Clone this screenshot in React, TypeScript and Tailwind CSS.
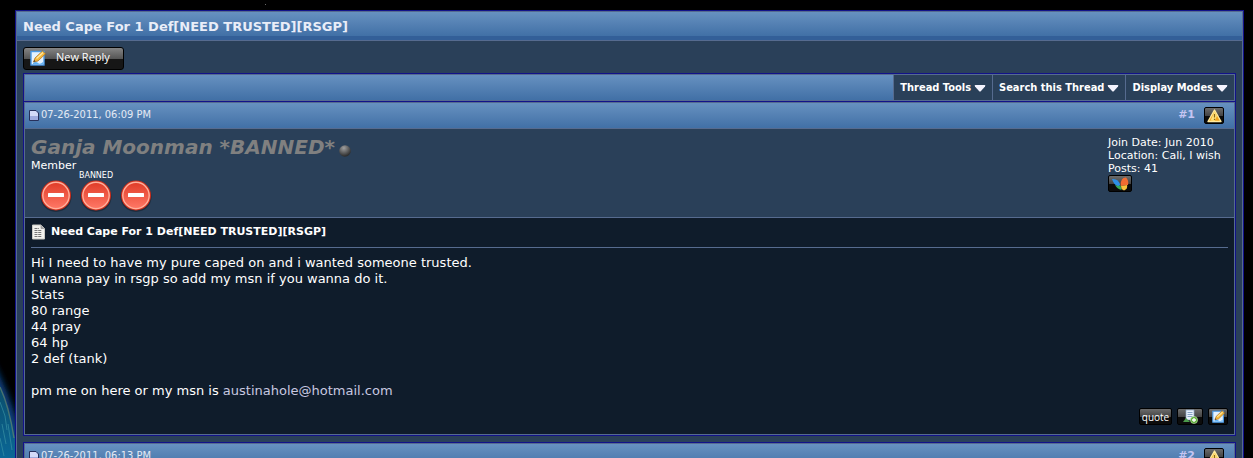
import { ReactNode } from 'react';

const TAHOMA = "font-['DejaVu_Sans_Condensed','DejaVu_Sans',sans-serif]";

function Frame({ children, className = '' }: { children: ReactNode; className?: string }) {
  return (
    <div className={`border border-[#12128a] ${className}`}>
      <div className="border border-[#566b8f]">{children}</div>
    </div>
  );
}

function PencilIcon({ className }: { className: string }) {
  return (
    <svg className={className} viewBox="0 0 16 16">
      <rect x="1" y="1.5" width="13" height="13.5" fill="#e4f2ff" stroke="#4a9be8" strokeWidth="1.4" />
      <path d="M3 13 Q6 11 8 13 T13 12 V14 H3Z" fill="#5fb2f5" />
      <path d="M3.5 12 L5 8 L12.5 1 L15.5 3.8 L8 11Z" fill="#f5b83b" stroke="#a8691a" strokeWidth=".7" />
      <path d="M6.5 8.5 L13 2.5" stroke="#ffe9a0" strokeWidth="1.3" />
      <path d="M3.5 12 L4.2 10 L5.5 11.3Z" fill="#333" />
    </svg>
  );
}

function Arrow() {
  return (
    <svg className="w-3 h-[7px] ml-[3px]" viewBox="0 0 12 7">
      <path d="M1.5 0 H10.5 Q12 0 11 1.4 L7 6 Q6 7 5 6 L1 1.4 Q0 0 1.5 0Z" fill="#f4f4ff" />
    </svg>
  );
}

function NoEntry() {
  return (
    <svg className="w-8 h-8" viewBox="0 0 32 32">
      <ellipse cx="16" cy="17" rx="15.5" ry="15" fill="#000" opacity=".3" />
      <circle cx="16" cy="15.5" r="15" fill="#cf2f1c" />
      <circle cx="16" cy="15.5" r="13.2" fill="url(#stop)" stroke="#ffb09c" strokeWidth="1.4" />
      <rect x="8" y="13" width="16" height="4" rx=".6" fill="#fff" />
      <defs>
        <linearGradient id="stop" x1="0" y1="0" x2="0" y2="1">
          <stop offset="0" stopColor="#e03c28" />
          <stop offset="1" stopColor="#ff7866" />
        </linearGradient>
      </defs>
    </svg>
  );
}

function GlossButton({ label, className, children }: { label: string; className: string; children: ReactNode }) {
  return (
    <button
      aria-label={label}
      className={`flex items-center justify-center border border-black rounded-xs bg-linear-to-b from-[#6c6c6c] from-0% via-[#454545] via-50% to-[#0c0c0c] to-55% ${className}`}
    >
      {children}
    </button>
  );
}

function PostHeader({ date, num }: { date: string; num: string }) {
  return (
    <div className={`flex items-center h-[25px] pl-1 pr-[10px] text-[11px] text-[#e4eaf4] bg-linear-to-b from-[#6791c0] to-[#4170a6] ${TAHOMA}`}>
      <svg className="w-[10px] h-[11px] mr-[2px]" viewBox="0 0 10 11">
        <path d="M.5 .5 H7 L9.5 3 V10.5 H.5Z" fill="#9fabdf" stroke="#27305c" />
        <path d="M1 1 H6.5 L9 3.5 V6 H1Z" fill="#d3daf8" />
      </svg>
      <span>{date}</span>
      <a href="#" className="ml-auto mr-[9px] font-['DejaVu_Sans',sans-serif] font-bold text-[#c5c5f2]">
        {num}
      </a>
      <GlossButton label="Report post" className="w-5 h-[17px]">
        <svg className="w-[15px] h-[14px]" viewBox="0 0 15 14">
          <path d="M7.5 1 L14 12.5 H1Z" fill="#f3a71f" stroke="#ffeaa0" strokeWidth="1.4" strokeLinejoin="round" />
          <path d="M7.5 2.5 L10 7 L7.5 12 L3.5 11.5Z" fill="#ffe27a" />
          <path d="M7.5 5 V8.5 M7.5 9.7 V11" stroke="#8a6414" strokeWidth="1.2" />
        </svg>
      </GlossButton>
    </div>
  );
}

export default function App() {
  return (
    <div className="relative h-screen overflow-hidden bg-black pt-[10px] pl-[15px] pr-[9px] font-['DejaVu_Sans',sans-serif] text-white">
      <svg className="absolute left-0 bottom-0 w-[15px] h-[118px]" viewBox="0 0 15 118">
        <defs>
          <linearGradient id="sea" x1="0" y1="0" x2="0" y2="1">
            <stop offset="0" stopColor="#0a4a66" />
            <stop offset="1" stopColor="#0b6796" />
          </linearGradient>
          <filter id="haze" x="-50%" y="-20%" width="200%" height="140%">
            <feGaussianBlur stdDeviation="3" />
          </filter>
        </defs>
        <path d="M-8 20 Q8 50 20 90 V125 H-8Z" fill="#0a4080" filter="url(#haze)" />
        <path d="M-4 38 Q8 62 17 108 V118 H-4Z" fill="url(#sea)" />
        <path d="M0 47 Q9 66 14 98" stroke="#62866f" strokeWidth="1.4" fill="none" opacity=".7" />
        <path d="M0 62 L5 76 L7 90 M2 84 L6 104 M8 84 L12 110 M0 98 L4 116" stroke="#3f9aa8" strokeWidth="1" fill="none" opacity=".6" />
      </svg>
      <i className="absolute left-[265px] top-1 size-px bg-[#666]" />

      <Frame className="relative">
        <div className="bg-[#2a4059]">
          <h1 className="h-[29px] pl-[6px] leading-[29px] text-[13px] font-bold text-[#e9edf8] border-b border-[#566b8f] bg-linear-to-b from-[#6791c0] from-0% via-[#4170a6] via-86% to-[#335f98] to-86%">
            Need Cape For 1 Def[NEED TRUSTED][RSGP]
          </h1>

          <div className="px-[6px] pt-[6px]">
            <button className="flex items-center w-[101px] h-[23px] mb-[3px] pl-[6px] pb-[2px] gap-[10px] rounded-[3px] border border-black bg-linear-to-b from-[#858585] from-0% via-[#565656] via-50% to-[#161616] to-50% font-['Open_Sans',sans-serif] text-[11px] text-white">
              <PencilIcon className="w-4 h-4" />
              <span className="whitespace-nowrap">New Reply</span>
            </button>

            <Frame>
              <div className={`flex h-[25px] justify-end bg-linear-to-b from-[#6791c0] to-[#4170a6] text-[11px] font-bold ${TAHOMA}`}>
                {['Thread Tools', 'Search this Thread', 'Display Modes'].map((t) => (
                  <button key={t} className="flex items-center px-[6px] pt-px bg-[#2a4059] border-l border-[#566b8f] whitespace-nowrap">
                    {t}
                    <Arrow />
                  </button>
                ))}
              </div>
            </Frame>

            <Frame className="border-t-0 mb-[6px]">
              <PostHeader date="07-26-2011, 06:09 PM" num="#1" />

              <div className="flex justify-between h-[90px] px-[6px] pt-[6px] border-y border-[#566b8f] text-[11px] leading-[13px]">
                <div>
                  <div className="flex items-center h-6">
                    <a href="#" className="text-[20px] italic font-bold text-[#808080]">
                      Ganja Moonman *BANNED*
                    </a>
                    <svg className="w-3 h-3 ml-1 mt-2" viewBox="0 0 12 12">
                      <defs>
                        <radialGradient id="ball" cx=".4" cy=".25" r=".7">
                          <stop offset="0" stopColor="#a0a0a0" />
                          <stop offset="1" stopColor="#2e2e2e" />
                        </radialGradient>
                      </defs>
                      <circle cx="6" cy="6" r="5.8" fill="url(#ball)" />
                    </svg>
                  </div>
                  <div>Member</div>
                  <div className="w-[130px] text-center text-[8px] leading-[8px]">BANNED</div>
                  <div className="flex gap-2 pl-[9px]">
                    <NoEntry />
                    <NoEntry />
                    <NoEntry />
                  </div>
                </div>
                <div className="min-w-[120px] pt-px">
                  <div>Join Date: Jun 2010</div>
                  <div>Location: Cali, I wish</div>
                  <div>Posts: 41</div>
                  <GlossButton label="MSN" className="w-6 h-[17px]">
                    <svg className="w-[18px] h-[14px] shrink-0" viewBox="0 0 18 14">
                      <path d="M1 2 Q7 1 9.5 8 L7 9.5 Q3 8 1 2Z" fill="#2d8fe8" />
                      <path d="M4 8 L7 9 L9.5 8 L10.5 13 Q6 12 4 8Z" fill="#37a95a" />
                      <path d="M9.5 8 Q10 0 15 .5 Q18 3 17 8 L10 9Z" fill="#f26b31" />
                      <path d="M10 9 L16 8 Q17 12 13 13.5 L10.5 12Z" fill="#f9c23c" />
                    </svg>
                  </GlossButton>
                </div>
              </div>

              <div className="bg-[#0f1c2b] px-[6px] pt-[6px] pb-[9px]">
                <div className="flex items-center h-4 mb-[7px] gap-[5px] text-[11px] font-bold">
                  <svg className="w-[15px] h-4" viewBox="0 0 15 16">
                    <path d="M1.5 1 H10 L13.5 4.5 V15 H1.5Z" fill="#f2f2ee" stroke="#c9c9c4" />
                    <path d="M10 1 V4.5 H13.5" fill="#aaa" stroke="#888" strokeWidth=".6" />
                    <path d="M3.5 4.5 H8 M3.5 6.5 H11 M3.5 8.5 H11 M3.5 10.5 H11 M3.5 12.5 H11" stroke="#777" strokeDasharray="3 .7" />
                  </svg>
                  <span>Need Cape For 1 Def[NEED TRUSTED][RSGP]</span>
                </div>
                <hr className="border-[#566b8f] mb-[7px]" />
                <div className="text-[13px] leading-4">
                  Hi I need to have my pure caped on and i wanted someone trusted.
                  <br />
                  I wanna pay in rsgp so add my msn if you wanna do it.
                  <br />
                  Stats
                  <br />
                  80 range
                  <br />
                  44 pray
                  <br />
                  64 hp
                  <br />
                  2 def (tank)
                  <br />
                  <br />
                  pm me on here or my msn is{' '}
                  <a href="#" className="text-[#c8c8e0]">
                    austinahole@hotmail.com
                  </a>
                </div>
                <div className="flex justify-end gap-[5px] mt-[9px]">
                  <GlossButton label="quote" className="w-[33px] h-[17px]">
                    <span className="font-['Open_Sans',sans-serif] text-[10px] leading-3">quote</span>
                  </GlossButton>
                  <GlossButton label="Multi-quote" className="w-[26px] h-[17px]">
                    <svg className="w-[15px] h-[15px]" viewBox="0 0 15 15">
                      <path d="M3 1 H11 V11 H3Z" fill="#e9f1fb" stroke="#8aa5c4" strokeWidth=".7" />
                      <path d="M4.5 3.5 H9.5 M4.5 5.5 H9.5 M4.5 7.5 H9.5" stroke="#6d8fb8" strokeWidth=".8" />
                      <path d="M0 13 L3 9 L7 13Z" fill="#4b9a4b" />
                      <circle cx="11" cy="11" r="3.6" fill="#5fae3c" stroke="#d7f0c8" strokeWidth=".5" />
                      <path d="M11 9 V13 M9 11 H13" stroke="#fff" strokeWidth="1.3" />
                    </svg>
                  </GlossButton>
                  <GlossButton label="Quick reply" className="w-5 h-[17px]">
                    <PencilIcon className="w-[13px] h-[13px]" />
                  </GlossButton>
                </div>
              </div>
            </Frame>

            <Frame>
              <PostHeader date="07-26-2011, 06:13 PM" num="#2" />
            </Frame>
          </div>
        </div>
      </Frame>
    </div>
  );
}
